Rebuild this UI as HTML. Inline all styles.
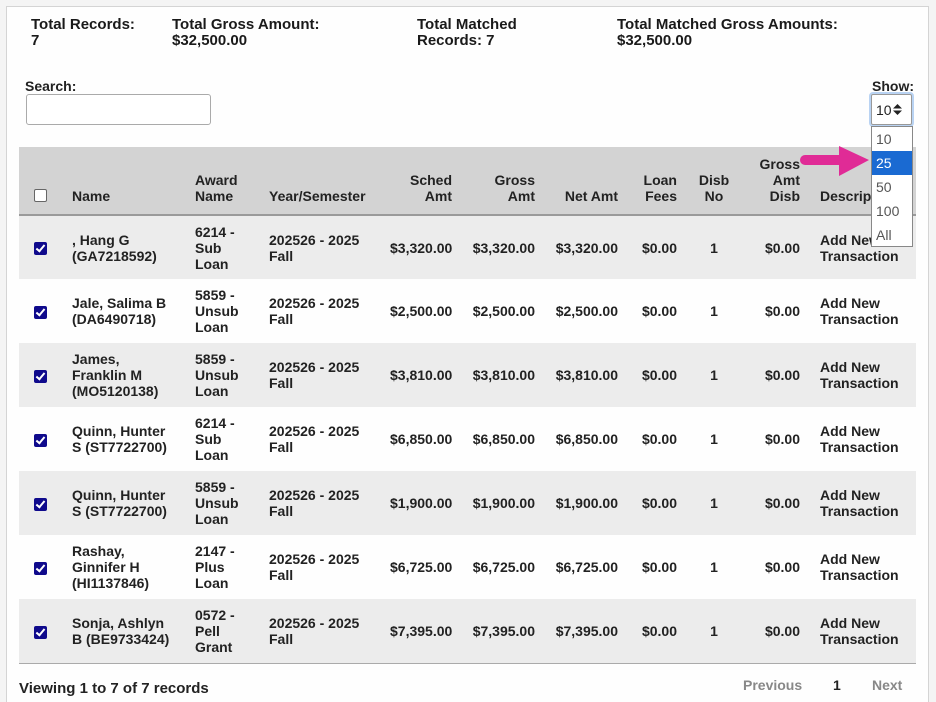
<!DOCTYPE html>
<html style="height:702px;overflow:hidden"><head><meta charset="utf-8"><style>
*{box-sizing:border-box;margin:0;padding:0}
body{width:936px;height:702px;background:#f4f4f4;font-family:"Liberation Sans",Arial,sans-serif;font-weight:bold;font-size:14px;color:#222;position:relative;overflow:hidden}
.card{position:absolute;left:6px;top:6px;width:923px;height:720px;background:#fefefe;border:1px solid #d4d4d4}
.abs{position:absolute;line-height:16px}
.sum{font-size:15px;color:#1a1a1a}
table{position:absolute;left:19px;top:147px;width:897px;border-collapse:collapse;table-layout:fixed}
th,td{line-height:16px;padding:0 10px;text-align:left}
thead tr{background:#d3d3d3;height:68px;border-bottom:2px solid #9a9a9a}
th{vertical-align:bottom;padding-bottom:10px}
tbody tr{height:64px}
tbody tr:nth-child(odd){background:#ececec}
tbody tr:nth-child(even){background:#fefefe}
tbody tr:last-child{border-bottom:1px solid #aaa}
.r{text-align:right}.c{text-align:center}
.cb{display:inline-block;width:13px;height:13px;border-radius:2px;vertical-align:middle}
.on{background:#0f0a8c;position:relative}
.on:after{content:"";position:absolute;left:4px;top:1px;width:3px;height:7px;border:solid #fff;border-width:0 2px 2px 0;transform:rotate(40deg)}
.off{border:1px solid #666;background:#fff}
</style></head><body>
<div class="card"></div>
<div class="abs sum" style="left:31px;top:17px">Total Records:<br>7</div>
<div class="abs sum" style="left:172px;top:17px">Total Gross Amount:<br>$32,500.00</div>
<div class="abs sum" style="left:417px;top:17px">Total Matched<br>Records: 7</div>
<div class="abs sum" style="left:617px;top:17px">Total Matched Gross Amounts:<br>$32,500.00</div>
<div class="abs" style="left:25px;top:78px">Search:</div>
<div class="abs" style="left:26px;top:94px;width:185px;height:31px;border:1px solid #aaa;border-radius:3px;background:#fff"></div>
<div class="abs" style="left:872px;top:78px">Show:</div>

<table>
<colgroup><col style="width:43px"><col style="width:123px"><col style="width:74px"><col style="width:121px"><col style="width:82px"><col style="width:83px"><col style="width:83px"><col style="width:59px"><col style="width:54px"><col style="width:69px"><col style="width:106px"></colgroup>
<thead><tr><th class="c" style="padding-bottom:12px"><span class="cb off"></span></th><th>Name</th><th>Award<br>Name</th><th>Year/Semester</th><th class="r">Sched<br>Amt</th><th class="r">Gross<br>Amt</th><th class="r">Net Amt</th><th class="r">Loan<br>Fees</th><th class="c">Disb<br>No</th><th class="r">Gross<br>Amt<br>Disb</th><th>Descrip</th></tr></thead>
<tbody>
<tr><td class="c"><span class="cb on"></span></td><td>, Hang G<br>(GA7218592)</td><td>6214 -<br>Sub<br>Loan</td><td>202526 - 2025<br>Fall</td><td class="r">$3,320.00</td><td class="r">$3,320.00</td><td class="r">$3,320.00</td><td class="r">$0.00</td><td class="c">1</td><td class="r">$0.00</td><td>Add New<br>Transaction</td></tr>
<tr><td class="c"><span class="cb on"></span></td><td>Jale, Salima B<br>(DA6490718)</td><td>5859 -<br>Unsub<br>Loan</td><td>202526 - 2025<br>Fall</td><td class="r">$2,500.00</td><td class="r">$2,500.00</td><td class="r">$2,500.00</td><td class="r">$0.00</td><td class="c">1</td><td class="r">$0.00</td><td>Add New<br>Transaction</td></tr>
<tr><td class="c"><span class="cb on"></span></td><td>James,<br>Franklin M<br>(MO5120138)</td><td>5859 -<br>Unsub<br>Loan</td><td>202526 - 2025<br>Fall</td><td class="r">$3,810.00</td><td class="r">$3,810.00</td><td class="r">$3,810.00</td><td class="r">$0.00</td><td class="c">1</td><td class="r">$0.00</td><td>Add New<br>Transaction</td></tr>
<tr><td class="c"><span class="cb on"></span></td><td>Quinn, Hunter<br>S (ST7722700)</td><td>6214 -<br>Sub<br>Loan</td><td>202526 - 2025<br>Fall</td><td class="r">$6,850.00</td><td class="r">$6,850.00</td><td class="r">$6,850.00</td><td class="r">$0.00</td><td class="c">1</td><td class="r">$0.00</td><td>Add New<br>Transaction</td></tr>
<tr><td class="c"><span class="cb on"></span></td><td>Quinn, Hunter<br>S (ST7722700)</td><td>5859 -<br>Unsub<br>Loan</td><td>202526 - 2025<br>Fall</td><td class="r">$1,900.00</td><td class="r">$1,900.00</td><td class="r">$1,900.00</td><td class="r">$0.00</td><td class="c">1</td><td class="r">$0.00</td><td>Add New<br>Transaction</td></tr>
<tr><td class="c"><span class="cb on"></span></td><td>Rashay,<br>Ginnifer H<br>(HI1137846)</td><td>2147 -<br>Plus<br>Loan</td><td>202526 - 2025<br>Fall</td><td class="r">$6,725.00</td><td class="r">$6,725.00</td><td class="r">$6,725.00</td><td class="r">$0.00</td><td class="c">1</td><td class="r">$0.00</td><td>Add New<br>Transaction</td></tr>
<tr><td class="c"><span class="cb on"></span></td><td>Sonja, Ashlyn<br>B (BE9733424)</td><td>0572 -<br>Pell<br>Grant</td><td>202526 - 2025<br>Fall</td><td class="r">$7,395.00</td><td class="r">$7,395.00</td><td class="r">$7,395.00</td><td class="r">$0.00</td><td class="c">1</td><td class="r">$0.00</td><td>Add New<br>Transaction</td></tr>
</tbody></table>

<div class="abs" style="left:19px;top:681px;font-size:15px">Viewing 1 to 7 of 7 records</div>
<div class="abs" style="left:743px;top:677px;color:#888">Previous</div>
<div class="abs" style="left:833px;top:677px;color:#222">1</div>
<div class="abs" style="left:872px;top:677px;color:#888">Next</div>

<!-- select -->
<div class="abs" style="left:869px;top:92px;width:45px;height:35px;border:2px solid #b9d3f3;border-radius:4px"></div>
<div class="abs" style="left:871px;top:94px;width:41px;height:31px;border:1px solid #999;border-radius:2px;background:#fff;font-weight:normal;padding:7px 0 0 4px">10</div>
<svg class="abs" style="left:893px;top:104px" width="9" height="11"><polygon points="0,4.5 4.5,0 9,4.5" fill="#222"/><polygon points="0,6.5 4.5,11 9,6.5" fill="#222"/></svg>
<div class="abs" style="left:871px;top:126px;width:42px;height:121px;border:1px solid #888;background:#fff;font-weight:normal;font-size:14px">
<div style="height:24px;padding:4px 0 0 4px;color:#555">10</div>
<div style="height:24px;padding:4px 0 0 4px;background:#1a6ad2;color:#fff">25</div>
<div style="height:24px;padding:4px 0 0 4px;color:#555">50</div>
<div style="height:24px;padding:4px 0 0 4px;color:#555">100</div>
<div style="height:24px;padding:4px 0 0 4px;color:#555">All</div>
</div>
<svg class="abs" style="left:795px;top:142px" width="80" height="40"><g fill="#e02b96"><rect x="5" y="13" width="45" height="10" rx="5"/><polygon points="44,4 74,18 44,34"/></g></svg>
</body></html>
